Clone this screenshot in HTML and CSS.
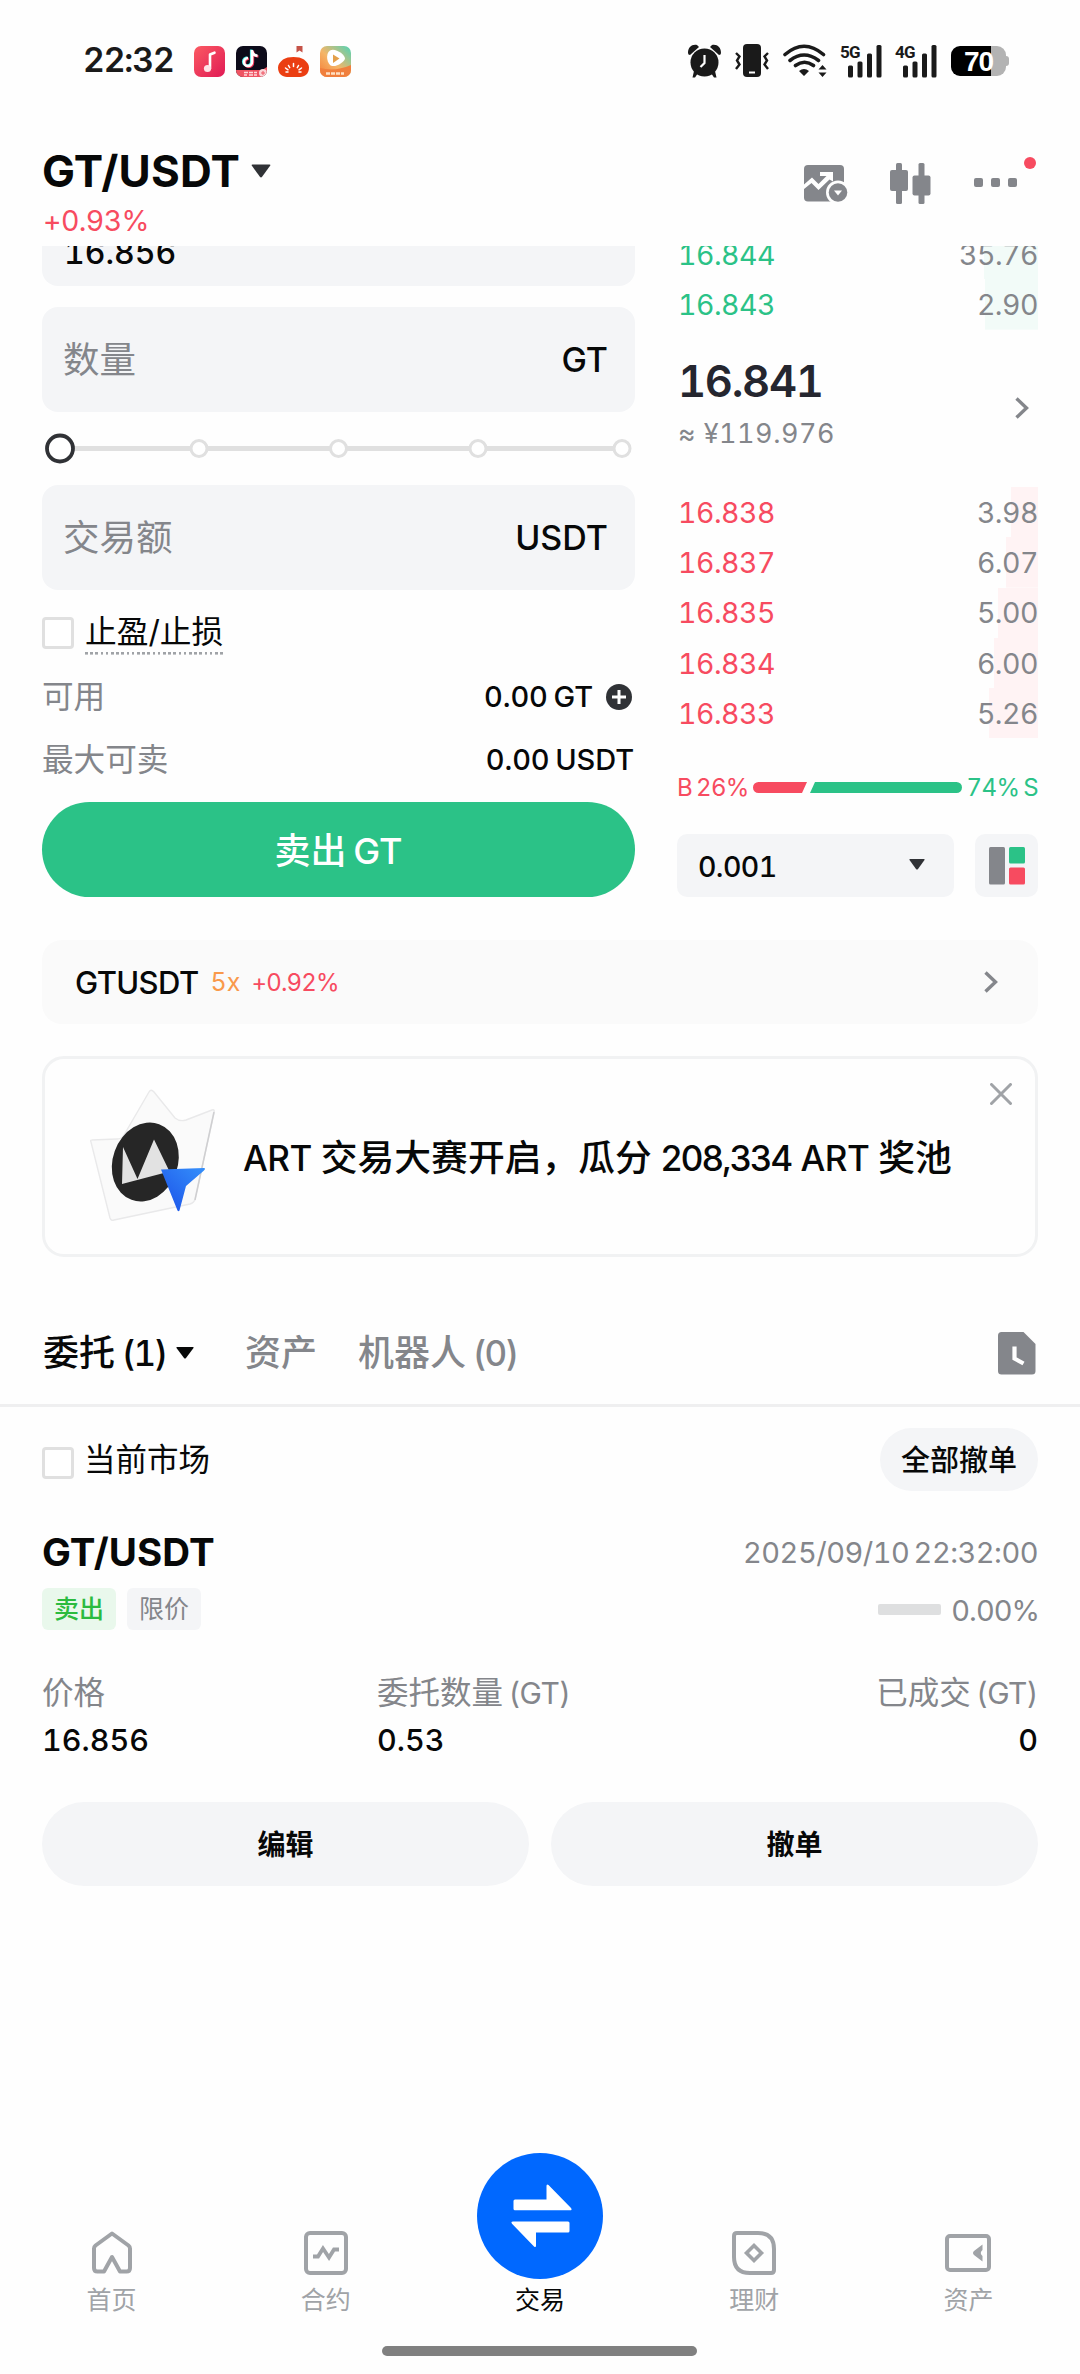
FILE: index.html
```html
<!DOCTYPE html>
<html lang="zh-CN">
<head>
<meta charset="utf-8">
<title>GT/USDT</title>
<link rel="stylesheet" href="styles.css">
</head>
<body>
<div class="app">
  <div class="status">
    <span class="clock">22:32</span>
    <div class="apps">
      <svg width="31" height="31" viewBox="0 0 31 31"><defs><linearGradient id="music" x1="0" y1="0" x2="1" y2="1"><stop offset="0" stop-color="#fb5a62"/><stop offset="1" stop-color="#e01a55"/></linearGradient></defs><rect width="31" height="31" rx="7" fill="url(#music)"/><path d="M16 22.500V8.500l4.500-1.800" fill="none" stroke="#fff" stroke-width="2.600" stroke-linecap="round" stroke-linejoin="round"/><circle cx="13.500" cy="22.500" r="3.600" fill="#ffe3e6"/></svg>
      <svg width="31" height="31" viewBox="0 0 31 31"><defs><clipPath id="tile"><rect width="31" height="31" rx="7"/></clipPath></defs><g clip-path="url(#tile)"><rect width="31" height="31" fill="#0d0b1a"/><g fill="none" stroke-width="2.600"><path d="M16 4v12a4 4 0 1 1-4-4M16 5c.5 3 2.500 4.500 5.500 4.800" stroke="#3ee8e4" transform="translate(-.8 -.4)"/><path d="M16 4v12a4 4 0 1 1-4-4M16 5c.5 3 2.500 4.500 5.500 4.800" stroke="#f5395b" transform="translate(.9 .7)"/><path d="M16 4v12a4 4 0 1 1-4-4M16 5c.5 3 2.500 4.500 5.500 4.800" stroke="#fff"/></g><path d="M0 24h26l5-3v10H0z" fill="#ef5463"/><path d="M8 26.500h4m1 0h4m1 0h3M8 29h3m2 0h4m1 0h3" stroke="#ffd9dc" stroke-width="1.300"/><circle cx="27" cy="27" r="4" fill="#fbd3d6"/><path d="M25 27h4m-2-2v4" stroke="#ef5463"/></g></svg>
      <svg width="31" height="31" viewBox="0 0 31 31"><path d="M18.500 0h6v6.500l-3-2-3 2z" fill="#c55348"/><path d="M5 13.500c5-3.300 16-3.300 21 0 3 2.500 5 5 5 8 0 6-4 9.500-9 9.500H9c-5 0-9-3.500-9-9.500 0-3 2-5.500 5-8z" fill="#eb3e12"/><g stroke="#fff" stroke-width="1.500" stroke-linecap="round"><path d="M15.500 17.500v3M10.500 19.500l1.200 2.200M20.500 19.500l-1.200 2.200M7.500 22l2.500 1.800M23.500 22 21 23.800M8 26h2M23 26h-2"/></g></svg>
      <svg width="31" height="31" viewBox="0 0 31 31"><defs><linearGradient id="tv" x1="0" y1="1" x2="1" y2="0"><stop offset="0" stop-color="#f47b35"/><stop offset=".45" stop-color="#f5b567"/><stop offset="1" stop-color="#4fd4b6"/></linearGradient></defs><g clip-path="url(#tile)"><rect width="31" height="31" fill="url(#tv)"/><path d="M0 22q15 4 31-3v12H0z" fill="#f07f3d"/><path d="M10 4.500c5-3 15 4 15 8 0 3-8 8.500-13 7.500S5 7.500 10 4.500z" fill="#fff"/><path d="M13 8.500l6.500 4-6.500 4.500z" fill="#e3a04b"/><path d="M6 27.500h4m1 0h4m1 0h4m1 0h3" stroke="#ffe0c2" stroke-width="2.400"/></g></svg>
    </div>
    <div class="signals">
      <svg width="33" height="34" viewBox="0 0 33 34"><g fill="#1a1a1a"><circle cx="16.500" cy="18.500" r="14"/><path d="M0 9C0 3 4 0 9 1L11 3 2 11Q0 11 0 9zM33 9c0-6-4-9-9-8l-2 2 9 8q2 0 2-2z"/><path d="M6 27l4 2-3 4.500H4.500zM27 27l-4 2 3 4.500h2.500z"/></g><path d="M16.500 11v8l-4 4" fill="none" stroke="#fff" stroke-width="2.200"/></svg>
      <svg class="vibrate" width="34" height="34" viewBox="0 0 34 34"><rect x="8" width="18" height="33" rx="4" fill="#1a1a1a"/><path d="M14 28.500h6" stroke="#fff" stroke-width="2"/><path d="M1 9l3.500 3.500L2 16.500l2.500 4L1 25M33 9l-3.500 3.500 2.500 4-2.500 4L33 25" fill="none" stroke="#1a1a1a" stroke-width="2.400"/></svg>
      <svg class="wifi" width="44" height="34" viewBox="0 0 44 34"><g fill="none" stroke="#1a1a1a" stroke-width="3.600" stroke-linecap="round"><path d="M2 10.500Q21 -6 40.500 10.500M7 16.500q14-11 28.500 0M12.500 21.500q9-6.500 18 0"/></g><path d="M16 27q5-4 10 0l-5 5zM35.500 25.500l4-4.500 4 4.500zM35.500 28.500l4 4.500 4-4.500z" fill="#1a1a1a"/></svg>
      <div class="cell"><svg width="34" height="33" viewBox="0 0 34 33"><g fill="#1a1a1a"><rect y="20.500" width="5" height="12" rx="1.500"/><rect x="9.500" y="16.500" width="5" height="16" rx="1.500"/><rect x="19" y="8.500" width="5" height="24" rx="1.500"/><rect x="28.500" y="0" width="5" height="32.500" rx="1.500"/></g></svg><b>5G</b></div>
      <div class="cell"><svg width="34" height="33" viewBox="0 0 34 33"><g fill="#1a1a1a"><rect y="20.500" width="5" height="12" rx="1.500"/><rect x="9.500" y="16.500" width="5" height="16" rx="1.500"/><rect x="19" y="8.500" width="5" height="24" rx="1.500"/><rect x="28.500" y="0" width="5" height="32.500" rx="1.500"/></g></svg><b>4G</b></div>
      <div class="battery"><span>70</span></div>
    </div>
  </div>

  <header class="head">
    <div class="pair">
      <div class="pair-name"><h1>GT/USDT</h1><svg width="20" height="14" viewBox="0 0 20 14"><path d="M1.500 .5h17q1.500 0 .6 1.300l-8 11q-1.100 1.200-2.200 0l-8-11Q0 .5 1.500 .5z" fill="#303236"/></svg></div>
      <div class="pair-change">+0.93%</div>
    </div>
    <div class="tools">
      <svg width="44" height="38" viewBox="0 0 44 38"><rect width="40" height="36.500" rx="4" fill="#84868b"/><path d="M0 19.500l8-7 6.500 6.500 8-8H16V7h13v9.500l-3.500-2L14.500 25 7.500 18 0 24z" fill="#fff"/><circle cx="34" cy="27.500" r="12" fill="#fefefe"/><circle cx="34" cy="27.500" r="9.300" fill="#84868b"/><path d="M30 25.500h8l-4 5z" fill="#fff"/></svg>
      <svg class="candles" width="41" height="42" viewBox="0 0 41 42"><g fill="#84868b"><rect y="7" width="18" height="21" rx="2"/><rect x="6" width="6" height="41" rx="1.500"/><rect x="22.500" y="12.500" width="18" height="20" rx="2"/><rect x="28.500" width="6" height="41" rx="1.500"/></g></svg>
      <div class="more"><i></i><i></i><i></i><b class="dot"></b></div>
    </div>
  </header>

  <main class="view">
    <section class="trade">
      <div class="form">
        <div class="field price"><span>16.856</span></div>
        <div class="field amount"><span class="hint">数量</span><span class="unit">GT</span></div>
        <svg class="slider" width="593" height="73" viewBox="0 0 593 73"><path d="M18 36.500h562" stroke="#e0e0e0" stroke-width="5"/><g fill="#fff" stroke="#e0e0e0" stroke-width="3"><circle cx="157" cy="36.500" r="8"/><circle cx="296.500" cy="36.500" r="8"/><circle cx="436" cy="36.500" r="8"/><circle cx="580" cy="36.500" r="8"/></g><circle cx="18" cy="36.500" r="13" fill="#fff" stroke="#303236" stroke-width="3.800"/></svg>
        <div class="field"><span class="hint">交易额</span><span class="unit">USDT</span></div>
        <div class="lines">
          <div class="line"><i class="check"></i><span class="tpsl">止盈/止损</span></div>
          <div class="line"><span class="label">可用</span><span class="val">0.00 GT</span><svg class="plus" width="26" height="26" viewBox="0 0 26 26"><circle cx="13" cy="13" r="13" fill="#303236"/><path d="M13 6v14M6 13h14" stroke="#fff" stroke-width="3"/></svg></div>
          <div class="line"><span class="label">最大可卖</span><span class="val">0.00 USDT</span></div>
        </div>
        <button class="sell">卖出 GT</button>
      </div>

      <div class="book">
        <div class="row ask" style="--depth:54px"><span>16.844</span><em>35.76</em></div>
        <div class="row ask" style="--depth:53px"><span>16.843</span><em>2.90</em></div>
        <div class="last">
          <div><div class="last-price">16.841</div><div class="last-cny">≈ ¥119.976</div></div>
          <svg width="14" height="22" viewBox="0 0 14 22"><path d="M1.500 1.500l10 9.500-10 9.500" fill="none" stroke="#84868b" stroke-width="3.400"/></svg>
        </div>
        <div class="row bid" style="--depth:27px"><span>16.838</span><em>3.98</em></div>
        <div class="row bid" style="--depth:32px"><span>16.837</span><em>6.07</em></div>
        <div class="row bid" style="--depth:40px"><span>16.835</span><em>5.00</em></div>
        <div class="row bid" style="--depth:44px"><span>16.834</span><em>6.00</em></div>
        <div class="row bid" style="--depth:49px"><span>16.833</span><em>5.26</em></div>
        <div class="ratio">
          <span class="red">B 26%</span>
          <svg width="209" height="11" viewBox="0 0 209 11"><path d="M5.500 0H54l-5 11H5.500a5.500 5.500 0 0 1 0-11z" fill="#f74b60"/><path d="M62 0h141.500a5.500 5.500 0 0 1 0 11H57z" fill="#2bc287"/></svg>
          <span class="green">74% S</span>
        </div>
        <div class="pick">
          <div class="select"><span>0.001</span><svg width="16" height="11" viewBox="0 0 16 11"><path d="M1 0h14q1 0 .5 1L9 10q-1 1.200-2 0L.5 1Q0 0 1 0z" fill="#303236"/></svg></div>
          <div class="layout"><svg width="36" height="38" viewBox="0 0 36 38"><rect width="16" height="37.500" rx="1.500" fill="#84868b"/><rect x="20" width="16" height="16.500" rx="1.500" fill="#2bc287"/><rect x="20" y="20.500" width="16" height="17" rx="1.500" fill="#f74b60"/></svg></div>
        </div>
      </div>
    </section>

    <section class="perp">
      <span class="perp-name">GTUSDT</span><span class="lever">5x</span><span class="perp-change">+0.92%</span>
      <svg width="14" height="22" viewBox="0 0 14 22"><path d="M1.500 1.500l10 9.500-10 9.500" fill="none" stroke="#84868b" stroke-width="3.400"/></svg>
    </section>

    <section class="banner">
      <svg class="art" width="126" height="136" viewBox="0 0 126 136">
        <defs><linearGradient id="fin" x1="0" y1="1" x2="1" y2="0"><stop offset="0" stop-color="#1b50e8"/><stop offset="1" stop-color="#3590fb"/></linearGradient></defs>
        <path d="M1 53q-1-2 1-2l25-1q5 0 7-4L59 3q2-3.500 5 0l21 26q5 4 11 2l26-10q3-1 2 3l-19 86q-1 4-5 5l-76 16q-3 1-4-2z" fill="#fafafa" stroke="#e9e9ea" stroke-width="1.400"/>
        <path d="M124 23l-19 88" stroke="#cfcfd1" stroke-width="1.500"/>
        <ellipse cx="55.300" cy="73" rx="32.500" ry="40.300" transform="rotate(20 55.300 73)" fill="#262626"/>
        <path d="M33 58l14.500 32L64 50.500 79.500 82.500 32 95z" fill="#e2e2e2"/>
        <path d="M71 80.500l43-1.500q2 .5 0 2.500L96 97l-6.500 24.500q-1 1.500-2 0z" fill="url(#fin)"/>
      </svg>
      <p><span class="lat">ART</span> 交易大赛开启，瓜分 <span class="num">208,334</span> <span class="lat">ART</span> 奖池</p>
      <svg class="close" width="22" height="22" viewBox="0 0 22 22"><path d="M1.500 1.500l19 19M20.500 1.500l-19 19" stroke="#a0a3a7" stroke-width="3" stroke-linecap="round"/></svg>
    </section>

    <nav class="tabs">
      <span class="tab on">委托 <span class="count">(1)</span></span><svg class="tab-caret" width="18" height="12" viewBox="0 0 18 12"><path d="M1 0h16q1 0 .5 1L10 11q-1 1.200-2 0L.5 1Q0 0 1 0z" fill="#070808"/></svg>
      <span class="tab">资产</span><span class="tab bots">机器人 <span class="count">(0)</span></span>
      <svg class="history" width="38" height="43" viewBox="0 0 38 43"><path d="M3.500 0H25.500L37.500 12V39q0 3.500-3.500 3.500H3.500Q0 42.500 0 39V3.500Q0 0 3.500 0z" fill="#84868b"/><path d="M16.500 14.500v12l9 5" fill="none" stroke="#fff" stroke-width="4.200"/></svg>
    </nav>

    <div class="filter"><i class="check"></i><span class="market">当前市场</span><button class="cancel-all">全部撤单</button></div>

    <article class="order">
      <div class="order-top"><h2>GT/USDT</h2><time>2025/09/10 22:32:00</time></div>
      <div class="order-tags"><span class="tag sell-tag">卖出</span><span class="tag">限价</span><i class="progress"></i><span class="percent">0.00%</span></div>
      <div class="cols">
        <div><div class="k">价格</div><div class="v">16.856</div></div>
        <div><div class="k">委托数量 <span class="gt">(GT)</span></div><div class="v">0.53</div></div>
        <div class="right"><div class="k">已成交 <span class="gt">(GT)</span></div><div class="v">0</div></div>
      </div>
      <div class="actions"><button>编辑</button><button>撤单</button></div>
    </article>
  </main>

  <footer class="dock">
    <div class="dock-items">
      <div class="item"><svg width="44" height="46" viewBox="0 0 44 46"><path d="M22 3.500L38.500 15.500q1.500 1.200 1.500 3V38q0 3.500-3.500 3.500h-6.500L22 27l-8 14.500H7.500Q4 41.500 4 38V18.500q0-1.800 1.500-3z" fill="none" stroke="#a0a3a7" stroke-width="4" stroke-linejoin="round"/></svg><span>首页</span></div>
      <div class="item"><svg width="46" height="46" viewBox="0 0 46 46"><rect x="3" y="3" width="40" height="40" rx="4" fill="none" stroke="#a0a3a7" stroke-width="4"/><path d="M10 26.500h5l5-8 6 9 5-8h5" fill="none" stroke="#a0a3a7" stroke-width="3.800"/></svg><span>合约</span></div>
      <div class="item on"><svg width="126" height="126" viewBox="0 0 126 126"><circle cx="63" cy="63" r="63" fill="#0068ff"/><path d="M38 46.500h31.500V33q0-2.500 2-1L94 55q1.500 2.300-1 2.300H38q-1.500 0-1.500-1.500V48q0-1.500 1.500-1.500zM91 68.500H36q-2.500 0-1 2.300L57 93.500q2 1.500 2-1V79.500H91q1.500 0 1.500-1.500V70q0-1.500-1.500-1.500z" fill="#fff"/></svg><span>交易</span></div>
      <div class="item"><svg width="46" height="46" viewBox="0 0 46 46"><path d="M6 3H27q16 0 16 16V40q0 3-3 3H19Q3 43 3 27V6q0-3 3-3z" fill="none" stroke="#a0a3a7" stroke-width="4"/><path d="M23 15.500l7.500 7.500-7.500 7.500-7.500-7.500z" fill="none" stroke="#a0a3a7" stroke-width="3.600"/></svg><span>理财</span></div>
      <div class="item"><svg width="48" height="46" viewBox="0 0 48 46"><rect x="3" y="6" width="42" height="34" rx="3" fill="none" stroke="#a0a3a7" stroke-width="4"/><path d="M38.500 14.500v5.500q-3.500 3 0 6v5.500L30 25q-2-2 0-4z" fill="#a0a3a7"/></svg><span>资产</span></div>
    </div>
    <div class="home-bar"></div>
  </footer>
</div>
</body>
</html>
```
FILE: styles.css
```css
* { box-sizing: border-box; }
body {
  margin: 0;
  background: #fefefe;
  color: #070808;
  font-family: Inter, "Noto Sans CJK SC", sans-serif;
  font-variant-numeric: tabular-nums;
}
h1, h2, p { margin: 0; }
em { font-style: normal; }
svg { display: block; flex: none; }
button { border: 0; padding: 0; font: inherit; color: inherit; }

.app { width: 1080px; height: 2374px; display: flex; flex-direction: column; overflow: hidden; }

/* Status bar */
.status { height: 120px; flex: none; display: flex; align-items: center; padding: 2px 74px 0 83px; }
.clock { width: 111px; margin-top: -3px; font-size: 33.500px; font-weight: 600; letter-spacing: -1px; color: #1a1a1a; white-space: nowrap; }
.apps { display: flex; gap: 11px; }
.signals { display: flex; align-items: center; margin-left: auto; }
.vibrate { margin-left: 14px; }
.wifi { margin-left: 14px; }
.cell { position: relative; width: 42px; padding-left: 8px; margin-left: 13px; }
.cell b { position: absolute; left: 0; top: -1px; font: 700 17px/16px Roboto, sans-serif; color: #1a1a1a; letter-spacing: -.8px; }
.battery {
  position: relative; width: 55px; height: 30px; margin-left: 14px; border-radius: 9px;
  background: linear-gradient(90deg, #000 40px, #b3b3b3 40px);
  color: #fff; font-size: 28px; font-weight: 700; line-height: 32px; text-align: center; letter-spacing: -1px;
  font-family: "Liberation Sans", sans-serif;
}
.battery::after { content: ""; position: absolute; right: -3px; top: 10px; width: 3px; height: 10px; border-radius: 0 3px 3px 0; background: #b3b3b3; }

/* Pair header */
.head { height: 126px; flex: none; display: flex; justify-content: space-between; padding: 0 42px; }
.pair { padding-top: 26px; }
.pair-name { display: flex; align-items: center; gap: 11px; height: 50px; }
h1 { font-size: 44px; line-height: 50px; font-weight: 700; letter-spacing: .2px; }
.pair-change { font-size: 28.500px; line-height: 34px; margin-top: 8px; padding-left: 1px; color: #f74b60; letter-spacing: -.6px; }
.tools { display: flex; align-items: flex-start; padding-top: 45px; }
.candles { margin: -2px 0 0 42px; }
.more { position: relative; display: flex; gap: 8px; margin: 13px 21px 0 43px; }
.more i { width: 9px; height: 9px; border-radius: 2px; background: #84868b; }
.dot { position: absolute; left: 50px; top: -21px; width: 12px; height: 12px; border-radius: 50%; background: #f74b60; }

.view { overflow: hidden; flex: 1; }
.trade { display: flex; gap: 42px; padding: 0 42px; height: 651px; }

/* Order form */
.form { width: 593px; }
.field { height: 105px; border-radius: 16px; background: #f4f5f7; display: flex; align-items: center; justify-content: space-between; padding: 0 27px 0 21px; font-weight: 500; }
.field.price { height: 104px; margin-top: -64px; padding-top: 37px; font-size: 32px; padding-left: 22px; }
.field.amount { margin-top: 21px; }
.hint { font-size: 36.500px; line-height: 50px; color: #84868b; font-weight: 400; }
.unit { font-size: 34px; line-height: 50px; padding-top: 1px; }
.lines { padding: 11px 0 10px; }
.line { display: flex; align-items: center; height: 63.700px; }
.check { width: 32px; height: 32px; border: 3px solid #e0e0e0; border-radius: 4px; background: #fff; flex: none; }
.tpsl { margin: 3px 0 0 11px; height: 41px; font-size: 31.700px; line-height: 35px; background: repeating-linear-gradient(90deg, #a0a3a7 0 2.600px, transparent 2.600px 5.200px) left bottom / 100% 2.600px no-repeat; }
.label { font-size: 31.600px; line-height: 44px; color: #84868b; flex: 1; }
.val { font-size: 29px; line-height: 44px; font-weight: 500; letter-spacing: -.1px; word-spacing: -2px; }
.plus { margin: 0 3px 0 13px; }
.line:last-child .val { margin-right: 1px; }
.sell { display: block; width: 593px; height: 95px; padding-bottom: 3px; border-radius: 48px; background: #2bc287; color: #fff; font-size: 36px; font-weight: 500; word-spacing: -3px; }

/* Order book */
.book { width: 361px; margin-top: -17px; }
.row { display: flex; justify-content: space-between; align-items: center; height: 50.300px; padding: 0 0 0 1px; font-size: 28.500px; letter-spacing: -.5px; background: linear-gradient(var(--tint), var(--tint)) right / var(--depth) 100% no-repeat; }
.row em { color: #84868b; }
.ask { --tint: #f2fbf8; color: #2bc287; }
.bid { --tint: #fff3f4; color: #f74b60; }
.last { height: 157.400px; display: flex; justify-content: space-between; align-items: center; padding: 0 9px 0 1px; }
.last-price { font-size: 43.500px; line-height: 54px; margin-top: -2px; font-weight: 600; color: #25262f; letter-spacing: -1.300px; }
.last-cny { font-size: 27px; line-height: 52px; color: #84868b; letter-spacing: .5px; }
.ratio { height: 96px; display: flex; align-items: center; font-size: 24px; padding-top: 3px; white-space: nowrap; word-spacing: -2px; letter-spacing: -.6px; }
.red { width: 76px; color: #f74b60; }
.green { flex: 1; color: #2bc287; text-align: right; }
.pick { display: flex; justify-content: space-between; }
.select { width: 277px; height: 63px; border-radius: 10px; background: #f4f5f7; display: flex; align-items: center; justify-content: space-between; padding: 2px 29px 0 21px; font-size: 28.500px; font-weight: 500; letter-spacing: -.6px; }
.select svg { margin-top: -4px; }
.layout { width: 63px; height: 63px; border-radius: 10px; background: #f4f5f7; display: grid; place-items: center; }

/* Perpetual shortcut */
.perp { margin: 43px 42px 0; height: 84px; border-radius: 20px; background: #fafafa; display: flex; align-items: center; padding: 0 40px 0 33px; }
.perp-name { font-size: 31px; font-weight: 500; letter-spacing: -.6px; margin-right: 12px; }
.lever { font-size: 25px; color: #f9994b; margin-right: 11px; }
.perp-change { font-size: 24px; color: #f74b60; letter-spacing: -.8px; }
.perp svg { margin-left: auto; }

/* Banner */
.banner { position: relative; margin: 32px 42px 0; height: 201px; border: 3px solid #f1f2f3; border-radius: 22px; display: flex; align-items: center; padding-left: 45px; }
.banner p { margin: 2px 0 0 27px; font-size: 36.800px; line-height: 50px; font-weight: 500; white-space: nowrap; word-spacing: -1px; }
.lat { font-size: 35px; letter-spacing: -.5px; }
.num { font-size: 35px; letter-spacing: -1.600px; font-variant-numeric: normal; }
.close { position: absolute; right: 23px; top: 24px; }

/* Tabs */
.tabs { margin-top: 45px; height: 105px; display: flex; align-items: center; padding: 0 44px 0 43px; border-bottom: 3px solid #efeff0; }
.tab { font-size: 36px; line-height: 50px; font-weight: 500; color: #84868b; white-space: nowrap; word-spacing: -3px; }
.count { font-size: 35px; letter-spacing: -1.800px; }
.tab.on { width: 133px; color: #070808; }
.tab-caret { margin: 0 51px 0 0; }
.bots { margin-left: 41px; }
.history { margin-left: auto; }

.filter { height: 106px; display: flex; align-items: center; padding: 0 42px; }
.filter .check { margin-top: 5px; }
.market { font-size: 31.500px; line-height: 44px; margin-left: 10px; flex: 1; }
.cancel-all { width: 158px; height: 63px; padding-bottom: 3px; margin-top: -1px; border-radius: 32px; background: #f4f5f7; font-size: 29px; font-weight: 500; }

/* Order card */
.order { padding: 13px 42px 0; }
.order-top { height: 52px; display: flex; align-items: center; justify-content: space-between; }
h2 { font-size: 38.500px; line-height: 52px; font-weight: 700; letter-spacing: .1px; }
time { font-size: 29px; color: #84868b; letter-spacing: -.5px; word-spacing: -3px; }
.order-tags { display: flex; align-items: center; margin-top: 10px; height: 42px; }
.tag { width: 74px; height: 42px; line-height: 42px; border-radius: 6px; background: #f4f5f7; color: #84868b; font-size: 25px; text-align: center; margin-right: 11px; }
.sell-tag { background: #e9f8ec; color: #2bbb3f; font-weight: 500; }
.progress { width: 63px; height: 11px; border-radius: 2px; background: #dedfe0; margin-left: auto; }
.percent { font-size: 29px; color: #84868b; margin: 3px -1px 0 10px; letter-spacing: -1px; }
.cols { display: grid; grid-template-columns: 335px 1fr auto; margin-top: 40px; }
.k { font-size: 31.500px; line-height: 46px; color: #84868b; word-spacing: -3px; }
.gt { font-size: 30px; letter-spacing: -.6px; }
.v { font-size: 30.500px; line-height: 48px; font-weight: 500; }
.right { text-align: right; }
.actions { display: flex; gap: 22px; margin-top: 38px; }
.actions button { flex: 1; height: 84px; padding-bottom: 3px; border-radius: 42px; background: #f4f5f7; font-size: 28px; font-weight: 700; }

/* Bottom navigation */
.dock { flex: none; height: 233px; display: flex; flex-direction: column; align-items: center; }
.dock-items { width: 1071px; display: flex; height: 186px; align-items: flex-end; }
.item { flex: 1; display: flex; flex-direction: column; align-items: center; font-size: 25px; line-height: 36px; color: #a0a3a7; }
.item svg { margin-bottom: 6px; }
.item.on { color: #070808; }
.item.on svg { margin-bottom: 3px; }
.item span { margin-bottom: 9px; }
.home-bar { width: 315px; height: 10px; border-radius: 5px; background: #808080; margin: 19px 1px 0 0; }
```
